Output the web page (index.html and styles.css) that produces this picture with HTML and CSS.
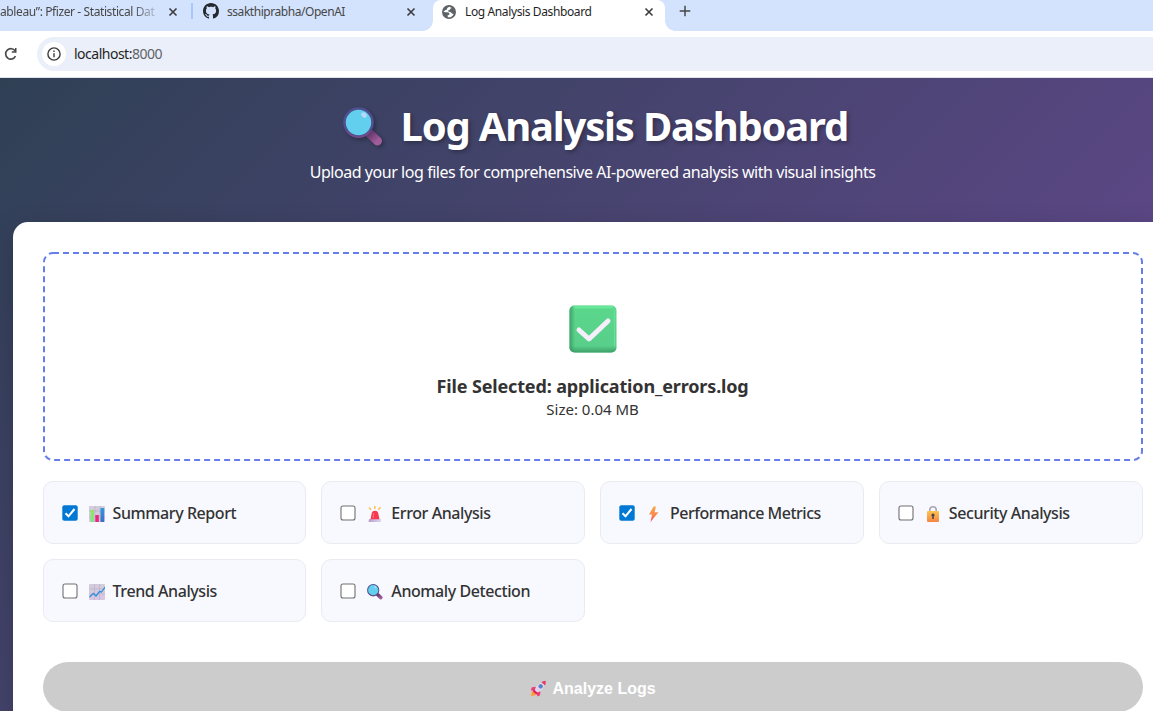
FILE: index.html
```html
<!DOCTYPE html>
<html lang="en">
<head>
<meta charset="utf-8">
<title>Log Analysis Dashboard</title>
<link rel="stylesheet" href="styles.css">
</head>
<body>
<svg class="defs" width="0" height="0" aria-hidden="true">
  <defs>
    <linearGradient id="handle" x1="0" y1="0" x2="1" y2="1"><stop offset="0" stop-color="#68396f"/><stop offset="1" stop-color="#a15c9b"/></linearGradient>
    <linearGradient id="bolt" x1="0" y1="0" x2="0" y2="1"><stop offset="0" stop-color="#f9a84a"/><stop offset=".55" stop-color="#f98a4d"/><stop offset="1" stop-color="#fb4c65"/></linearGradient>
    <linearGradient id="gold" x1="0" y1="0" x2="0" y2="1"><stop offset="0" stop-color="#fcc54b"/><stop offset="1" stop-color="#f58544"/></linearGradient>
    <linearGradient id="paper" x1="0" y1="0" x2="0" y2="1"><stop offset="0" stop-color="#d3cddb"/><stop offset="1" stop-color="#d9c6e3"/></linearGradient>
    <linearGradient id="green" x1="0" y1="0" x2="0" y2="1"><stop offset="0" stop-color="#8ee85c"/><stop offset="1" stop-color="#7fe58c"/></linearGradient>
    <linearGradient id="blue" x1="0" y1="0" x2="0" y2="1"><stop offset="0" stop-color="#2d9ae0"/><stop offset="1" stop-color="#3b6fc4"/></linearGradient>
    <linearGradient id="base" x1="0" y1="0" x2="1" y2="0"><stop offset="0" stop-color="#b5a0cc"/><stop offset="1" stop-color="#e0d5f0"/></linearGradient>
    <linearGradient id="tile" x1="0" y1="0" x2="0" y2="1"><stop offset="0" stop-color="#5bd88c"/><stop offset="1" stop-color="#58cd8a"/></linearGradient>
    <linearGradient id="shade" x1="0" y1="0" x2="1" y2="0"><stop offset="0" stop-color="#338f5c" stop-opacity=".8"/><stop offset="1" stop-color="#338f5c" stop-opacity="0"/></linearGradient>
    <linearGradient id="shade-low" x1="0" y1="1" x2="0" y2="0"><stop offset="0" stop-color="#338f5c" stop-opacity=".8"/><stop offset="1" stop-color="#338f5c" stop-opacity="0"/></linearGradient>
    <clipPath id="tile-clip"><rect x=".5" y=".5" width="47" height="47" rx="5"/></clipPath>
    <symbol id="lens" viewBox="0 0 40 40">
      <path d="M27 27L34.500 34" stroke="url(#handle)" stroke-width="9" stroke-linecap="round"/>
      <circle cx="15.500" cy="15.500" r="14" fill="#62cfee" stroke="#505090" stroke-width="2.600"/>
      <path d="M4 24A14 14 0 0 0 27 24" fill="none" stroke="#704c87" stroke-width="2"/>
      <ellipse cx="21" cy="8" rx="3" ry="2.400" fill="#b9d8f7" transform="rotate(40 21 8)"/>
    </symbol>
    <symbol id="close" viewBox="0 0 10 10"><path d="M1.500 1.500l7 7m0-7l-7 7" fill="none" stroke="currentColor" stroke-width="1.600"/></symbol>
    <symbol id="box" viewBox="0 0 16 16"><rect x="1" y="1" width="14" height="14" rx="2" fill="#fff" stroke="#717171" stroke-width="1.100"/></symbol>
    <symbol id="checked" viewBox="0 0 16 16"><rect x=".3" y=".3" width="15.400" height="15.400" rx="2" fill="#0078d4"/><path d="M3.500 8.300l3 3 6-7.300" fill="none" stroke="#fff" stroke-width="2.100"/></symbol>
  </defs>
</svg>
<div class="window">
  <header class="tabs">
    <div class="tab tab-first"><span class="tab-title faded">ableau”: Pfizer - Statistical Dat</span><svg class="x"><use href="#close"/></svg></div>
    <div class="tab tab-second">
      <svg class="github" viewBox="0 0 16 16"><path fill="#24292f" d="M8 0C3.580 0 0 3.580 0 8c0 3.540 2.290 6.530 5.470 7.590.4.070.55-.17.55-.38 0-.19-.01-.82-.01-1.490-2.010.37-2.530-.49-2.690-.94-.09-.23-.48-.94-.82-1.130-.28-.15-.68-.52-.01-.53.630-.01 1.080.58 1.230.82.72 1.210 1.870.87 2.330.66.070-.52.280-.87.510-1.070-1.780-.2-3.640-.89-3.640-3.950 0-.87.310-1.590.82-2.150-.08-.2-.36-1.020.08-2.120 0 0 .67-.21 2.200.82.640-.18 1.320-.27 2-.27s1.360.09 2 .27c1.530-1.040 2.200-.82 2.200-.82.440 1.100.16 1.920.08 2.120.51.56.82 1.270.82 2.150 0 3.070-1.870 3.750-3.650 3.950.29.25.54.73.54 1.480 0 1.070-.01 1.930-.01 2.200 0 .21.15.46.55.38A8.010 8.010 0 0 0 16 8c0-4.420-3.580-8-8-8z"/></svg>
      <span class="tab-title repo">ssakthiprabha/OpenAI</span><svg class="x"><use href="#close"/></svg>
    </div>
    <div class="tab tab-active">
      <svg class="globe" viewBox="0 0 14 14"><circle cx="7" cy="7" r="7" fill="#5f6368"/><path d="M7.300 1.700L5.200 2.900 5 4.500 3 5.300 1.500 7l3 .3 2 .1 1.100 1.300-.4 1.100-1.700.7.400 1.800c2.400.4 4.900-1 5.700-3.400L9.900 8.600 8.800 7.200 6.300 6.500 6 5.400l1.800-.3.500-1.300 1.500-.9z" fill="#fff"/></svg>
      <span class="tab-title current">Log Analysis Dashboard</span><svg class="x"><use href="#close"/></svg>
    </div>
    <svg class="plus" viewBox="0 0 12 12"><path d="M6 .7v10.600M.7 6h10.600" stroke="#474747" stroke-width="1.500"/></svg>
  </header>
  <div class="toolbar">
    <svg class="reload" viewBox="0 0 14 14"><path d="M11.500 9.200A5.200 5.200 0 1 1 11.200 4" fill="none" stroke="#474747" stroke-width="1.600"/><path d="M12.500 1v4.700H7.800V4.300h3.200V1z" fill="#474747"/></svg>
    <div class="address">
      <span class="info"><svg viewBox="0 0 14 14"><circle cx="7" cy="7" r="6.100" fill="none" stroke="#3c3c3c" stroke-width="1.400"/><path d="M7 6.200v4M7 3.600v1.500" stroke="#3c3c3c" stroke-width="1.400"/></svg></span>
      <span class="url">localhost:<span class="port">8000</span></span>
    </div>
  </div>
  <main class="page">
    <div class="hero">
      <h1><svg class="hero-lens"><use href="#lens"/></svg><span>Log Analysis Dashboard</span></h1>
      <p>Upload your log files for comprehensive AI-powered analysis with visual insights</p>
    </div>
    <section class="panel">
      <div class="drop">
        <svg class="dash" width="1100" height="209"><rect x="1" y="1" width="1098" height="207" rx="9"/></svg>
        <svg class="success" viewBox="0 0 48 48"><g clip-path="url(#tile-clip)"><rect width="48" height="48" fill="url(#tile)"/><path d="M4 2h40" stroke="#66e79a" stroke-width="3"/><path d="M45.500 4v37" stroke="#6ade9b"/><rect width="6" height="48" fill="url(#shade)"/><rect y="41" width="48" height="7" fill="url(#shade-low)"/></g><path d="M10 25l10 9L39 16" fill="none" stroke="#f4effa" stroke-width="5" stroke-linecap="round" stroke-linejoin="round"/></svg>
        <strong>File Selected: application_errors.log</strong>
        <span class="size">Size: 0.04 MB</span>
      </div>
      <div class="options">
        <label class="option"><svg class="check"><use href="#checked"/></svg><svg class="emoji" viewBox="0 0 16 16"><rect width="16" height="16" rx="1" fill="url(#paper)"/><path d="M0 5h16M0 11h16M6 0v16M11 0v16" stroke="#b5abc2" stroke-width=".6"/><path d="M1.500 4h3.500v12H1.500z" fill="url(#green)"/><path d="M6.300 9h3.500v7H6.300z" fill="#ec2678"/><path d="M11.500 2h3.700v14h-3.700z" fill="url(#blue)"/></svg><span>Summary Report</span></label>
        <label class="option"><svg class="check"><use href="#box"/></svg><svg class="emoji" viewBox="0 0 16 16"><path d="M2 13h12v3H1.500z" fill="url(#base)"/><path d="M3.500 13.200l1.300-6.500Q5.300 4.800 8 4.800t3.100 1.900l1.400 6.500z" fill="#f8384f"/><path d="M6.700 7L6 12" stroke="#ff7b82"/><path d="M7.800 0v3M2 1.500l2.100 2.300M13.500 1.200l-2.200 2.600" stroke="#fac14b" stroke-width="1.500"/></svg><span>Error Analysis</span></label>
        <label class="option"><svg class="check"><use href="#checked"/></svg><svg class="emoji" viewBox="0 0 16 16"><path d="M7.500.5L3 8.500h3L4.500 16l8-9.700H8.600L10 .5z" fill="url(#bolt)"/></svg><span class="tight">Performance Metrics</span></label>
        <label class="option"><svg class="check"><use href="#box"/></svg><svg class="emoji" viewBox="0 0 16 16"><path d="M4.800 7V4a3.200 3.200 0 0 1 6.400 0v3" fill="none" stroke="#aaa5b4" stroke-width="1.600"/><rect x="2" y="5" width="12" height="11" rx="1" fill="url(#gold)"/><circle cx="8" cy="9" r="1.600" fill="#4c404d"/><path d="M8 9v4" stroke="#4c404d" stroke-width="1.500"/></svg><span>Security Analysis</span></label>
        <label class="option"><svg class="check"><use href="#box"/></svg><svg class="emoji" viewBox="0 0 16 16"><rect width="16" height="16" rx="1" fill="url(#paper)"/><path d="M0 5h16M0 10h16M5.500 0v16M10.500 0v16" stroke="#b9afc7" stroke-width=".6"/><path d="M.5 13l4-3.500L7 12l3.500-4.500 2 .5L16 3" fill="none" stroke="#3190dc" stroke-width="1.300"/></svg><span>Trend Analysis</span></label>
        <label class="option"><svg class="check"><use href="#box"/></svg><svg class="emoji"><use href="#lens"/></svg><span>Anomaly Detection</span></label>
      </div>
      <button class="analyze"><svg viewBox="0 0 18 18"><path d="M1 17l1-4.500 3.500-1.500L7.500 14 5 16.300z" fill="#ff9b37"/><path d="M4 12Q6 5.500 12 2.300L15.700 5.600Q13 11.500 7 14.500z" fill="#dfd5ed"/><path d="M12 2.200Q14 .9 16.500.8 17.200 3.500 15.800 5.800z" fill="#eb3760"/><path d="M6.200 7.200L2 7.800.8 10.800l4 .8zM11 12l-.3 4.200-2.900 1.300-.8-4z" fill="#ed3f75"/><path d="M4 9.800L8.600 14l-2 1.300L3 12.200z" fill="#dd265e"/><circle cx="11.300" cy="6.700" r="2" fill="#438dd0" stroke="#6c75aa" stroke-width=".7"/></svg><span>Analyze Logs</span></button>
    </section>
  </main>
</div>
</body>
</html>
```
FILE: styles.css
```css
* { box-sizing: border-box; }
body { margin: 0; overflow: hidden; font-family: "Noto Sans", "Open Sans", sans-serif; color: #333; }
svg { flex: none; }
.defs { position: absolute; }
.window { width: 1153px; height: 711px; overflow: hidden; }

.tabs { display: flex; height: 31px; background: #d3e3fd; }
.tab { display: flex; align-items: center; height: 24px; font-size: 12px; color: #474747; white-space: nowrap; }
.tab-title { line-height: 24px; }
.x { width: 10px; height: 10px; margin: 0 0 1px auto; color: #3b3b3b; }
.tab-first { align-items: flex-start; width: 191px; padding-right: 13px; }
.tab-first .x { margin-top: 7px; }
.faded { width: 158px; letter-spacing: -.4px; -webkit-mask-image: linear-gradient(90deg, #000 132px, rgba(0,0,0,.15) 158px); mask-image: linear-gradient(90deg, #000 132px, rgba(0,0,0,.15) 158px); }
.tab-second { width: 242px; padding: 0 17px 0 12px; background: linear-gradient(#a8c7fa, #a8c7fa) 0 3px / 2px 16px no-repeat; }
.github { width: 16px; height: 16px; margin: 0 8px 2px 0; }
.repo { letter-spacing: -.45px; }
.tab-active { position: relative; height: 31px; width: 232px; padding: 0 11px 7px 9px; background: #fff; color: #1f1f1f; border-radius: 8px 8px 0 0; }
.tab-active::before, .tab-active::after { content: ""; position: absolute; bottom: 0; width: 10px; height: 10px; }
.tab-active::before { left: -10px; background: radial-gradient(circle at 0 0, #d3e3fd 9.5px, #fff 10px); }
.tab-active::after { right: -10px; background: radial-gradient(circle at 100% 0, #d3e3fd 9.5px, #fff 10px); }
.globe { width: 14px; height: 14px; margin: 0 9px 1px 0; }
.current { letter-spacing: -.38px; }
.plus { width: 12px; height: 12px; margin: 5px 0 0 14px; }

.toolbar { display: flex; height: 47px; padding: 6px 0 7px 4px; background: #fff; border-bottom: 1px solid #dfe3e9; }
.reload { width: 14px; height: 14px; margin-top: 10px; }
.address { display: flex; align-items: center; flex: 1; margin-left: 19px; padding-left: 5px; background: #ebeff9; border-radius: 17px 0 0 17px; height: 34px; }
.info { display: grid; place-items: center; width: 24px; height: 24px; margin-right: 8px; border-radius: 50%; background: #fff; }
.info svg { width: 14px; height: 14px; }
.url { font-size: 14px; line-height: 20px; padding-bottom: 1px; letter-spacing: -.5px; color: #1f1f1f; }
.port { color: #5f6368; }

.page { width: 1186px; height: 900px; padding: 0 13.4px 0 12.6px; background: linear-gradient(135deg, #2f4055 0%, #764ba2 100%); }
.hero { height: 144px; padding-top: 21px; color: #fff; text-align: center; }
.hero h1 { display: flex; justify-content: center; align-items: center; height: 54px; margin: 0; padding-left: 7px; font-size: 40px; line-height: 54px; white-space: nowrap; text-shadow: 2px 2px 4px rgba(0,0,0,.3); }
.hero h1 span { width: 449px; text-align: left; letter-spacing: -1.2px; }
.hero-lens { width: 40px; height: 40px; margin: 2px 18px 0 0; filter: drop-shadow(2px 2px 2px rgba(0,0,0,.3)); }
.hero p { margin: 7px 0 0; font-size: 16px; line-height: 24px; letter-spacing: -.45px; white-space: nowrap; }
.panel { height: 700px; padding: 30px; background: #fff; border-radius: 15px; box-shadow: 0 10px 30px rgba(0,0,0,.2); }
.drop { position: relative; display: flex; flex-direction: column; align-items: center; height: 209px; padding-top: 53px; }
.dash { position: absolute; inset: 0; }
.dash rect { fill: none; stroke: #667eea; stroke-width: 2; stroke-dasharray: 6 4; }
.success { width: 48px; height: 48px; margin-bottom: 21px; }
.drop strong { font-size: 18px; line-height: 24px; letter-spacing: -.15px; }
.size { font-size: 15px; line-height: 22px; letter-spacing: 0; }
.options { display: grid; grid-template-columns: repeat(4, 1fr); gap: 15px; margin-top: 20px; }
.option { display: flex; align-items: center; height: 63px; padding: 1px 18px 0; background: #f8f9ff; border: 1px solid #e9ebf0; border-radius: 10px; font-size: 16px; font-weight: 500; white-space: nowrap; }
.check { width: 16px; height: 16px; margin: 0 11px 1px 0; }
.emoji { width: 16px; height: 16px; margin: 1px 8px 0 0; }
.option span { letter-spacing: -.42px; }
.option .tight { letter-spacing: -.5px; }
.analyze { display: flex; align-items: center; justify-content: center; width: 100%; height: 50px; margin-top: 40px; padding: 3px 0 0; border: 0; border-radius: 25px; background: #ccc; color: #fff; font: bold 16px "Liberation Sans", sans-serif; }
.analyze svg { width: 17px; height: 17px; margin-right: 6px; }
```
